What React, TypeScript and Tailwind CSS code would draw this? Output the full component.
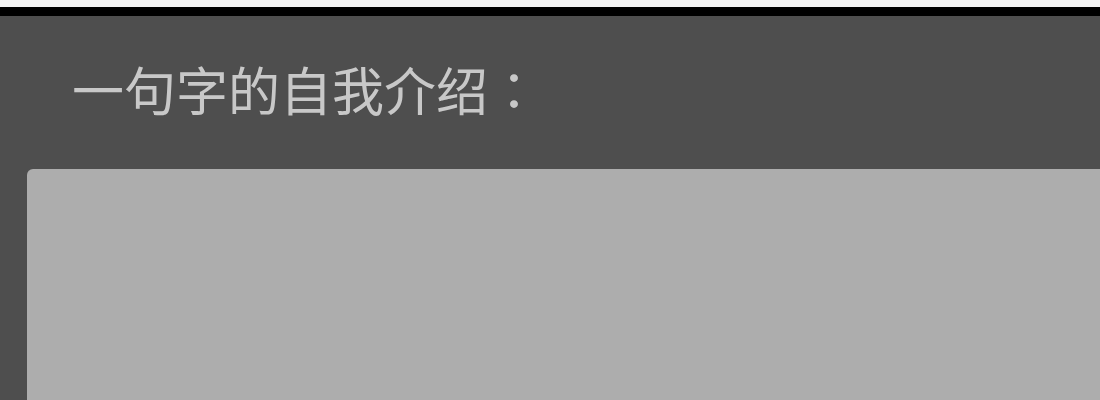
export default function App() {
  return (
    <div className="w-[1100px] h-[400px] overflow-hidden bg-[#4e4e4e] flex flex-col">
      <div className="h-[7px] bg-[#f4f4f4] shrink-0" />
      <div className="h-[9px] bg-black shrink-0" />
      <div className="pl-[72px] pt-[47px] shrink-0">
        <h1
          className="text-[52px] leading-none text-[#c8c8c8] font-normal"
          style={{ fontFamily: '"Noto Sans CJK SC", sans-serif' }}
        >
          一句字的自我介绍
          <span style={{ fontFamily: '"Noto Sans CJK TC", sans-serif' }}>：</span>
        </h1>
      </div>
      <div className="ml-[27px] mt-[54px] w-[1200px] h-[400px] shrink-0 rounded-tl-md bg-[#adadad]" />
    </div>
  );
}
